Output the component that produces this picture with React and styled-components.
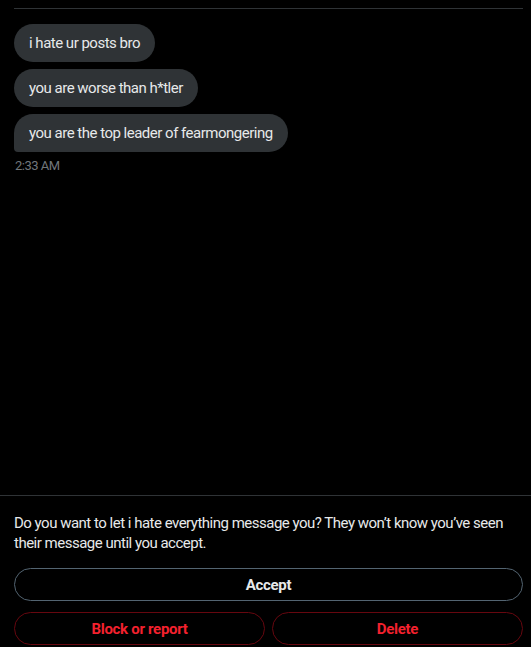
import React from 'react'
import styled, { createGlobalStyle } from 'styled-components'

const GlobalStyle = createGlobalStyle`
    html, body {
        margin: 0;
        padding: 0;
        background: #000;
    }

    body {
        font-family: Roboto, "Noto Sans", "Liberation Sans", sans-serif;
        color: #e7e9ea;
        letter-spacing: -0.5px;
    }
`;

const Page = styled.div`
    display: flex;
    flex-direction: column;
    height: 100vh;
    background: #000;
`;

const Conversation = styled.div`
    flex: 1;
    display: flex;
    flex-direction: column;
    padding: 8px 8px 0 14px;
`;

const Divider = styled.div`
    height: 1px;
    background: #2f3336;
    margin-bottom: 15px;
`;

const MessageList = styled.div`
    display: flex;
    flex-direction: column;
    align-items: flex-start;
    gap: 7px;
`;

const Bubble = styled.div`
    background: #2f3336;
    color: #e7e9ea;
    font-size: 15px;
    line-height: 20px;
    padding: 9px 15px;
    border-radius: 19px;
    border-bottom-left-radius: ${props => (props.$last ? '4px' : '19px')};
`;

const Timestamp = styled.div`
    color: #71767b;
    font-size: 13px;
    line-height: 16px;
    margin-top: 6px;
    margin-left: 1px;
`;

const RequestPanel = styled.div`
    border-top: 1px solid #2f3336;
    padding: 17px 8px 2px 14px;
    display: flex;
    flex-direction: column;
`;

const Prompt = styled.p`
    margin: 0 0 15px;
    font-size: 15px;
    line-height: 20px;
    color: #e7e9ea;
`;

const ActionButton = styled.button`
    height: 33px;
    border-radius: 17px;
    background: transparent;
    border: 1px solid ${props => (props.$danger ? '#67070f' : '#536471')};
    color: ${props => (props.$danger ? '#f4212e' : '#e7e9ea')};
    font-family: inherit;
    font-size: 15px;
    font-weight: 700;
    letter-spacing: -0.3px;
    cursor: pointer;
    width: 100%;
`;

const ButtonRow = styled.div`
    display: grid;
    grid-template-columns: 1fr 1fr;
    gap: 7px;
    margin-top: 11px;
`;

const messages = [
    'i hate ur posts bro',
    'you are worse than h*tler',
    'you are the top leader of fearmongering',
]

const App = () => {
    return (
        <Page>
            <GlobalStyle />
            <Conversation>
                <Divider />
                <MessageList>
                    {messages.map((text, i) => (
                        <Bubble key={i} $last={i === messages.length - 1}>{text}</Bubble>
                    ))}
                </MessageList>
                <Timestamp>2:33 AM</Timestamp>
            </Conversation>
            <RequestPanel>
                <Prompt>
                    Do you want to let i hate everything message you? They won’t know you’ve seen their message until you accept.
                </Prompt>
                <ActionButton>Accept</ActionButton>
                <ButtonRow>
                    <ActionButton $danger>Block or report</ActionButton>
                    <ActionButton $danger>Delete</ActionButton>
                </ButtonRow>
            </RequestPanel>
        </Page>
    )
}

export default App
